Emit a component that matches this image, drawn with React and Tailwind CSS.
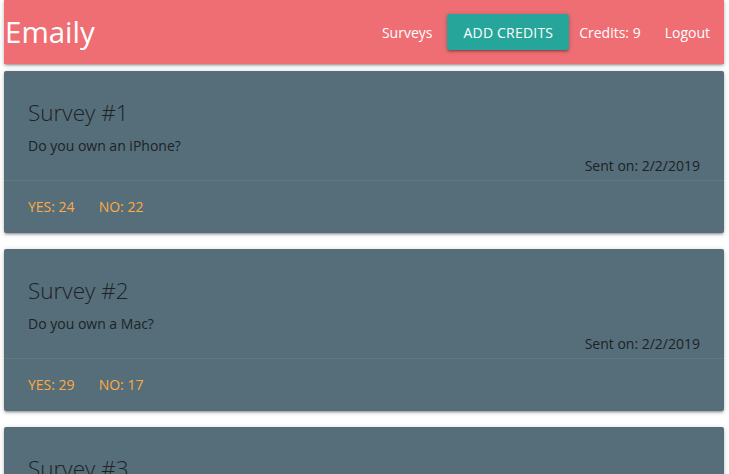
import React from "react";

const surveys = [
  { title: "Survey #1", body: "Do you own an iPhone?", sent: "2/2/2019", yes: 24, no: 22 },
  { title: "Survey #2", body: "Do you own a Mac?", sent: "2/2/2019", yes: 29, no: 17 },
  { title: "Survey #3", body: "Do you own an iPad?", sent: "2/2/2019", yes: 12, no: 30 },
];

const shadow =
  "shadow-[0_2px_2px_0_rgba(0,0,0,0.14),0_3px_1px_-2px_rgba(0,0,0,0.12),0_1px_5px_0_rgba(0,0,0,0.2)]";

function Header() {
  return (
    <nav
      className={`h-16 bg-[#ef6e74] text-white flex items-center justify-between ${shadow}`}
    >
      <a className="pl-[1px] text-[29.5px] leading-none pb-[1px]">Emaily</a>
      <ul className="flex items-center text-[14px] h-full">
        <li className="px-[15px]">Surveys</li>
        <li>
          <button
            className={`h-9 px-4 rounded-[2px] bg-[#26a69a] uppercase tracking-[0.2px] text-[14px] ${shadow}`}
          >
            Add Credits
          </button>
        </li>
        <li className="mx-[10px]">Credits: 9</li>
        <li className="px-[14px]">Logout</li>
      </ul>
    </nav>
  );
}

function SurveyCard({ survey }) {
  return (
    <div className={`mt-[7px] mb-4 bg-[#566e79] rounded-[2px] ${shadow}`}>
      <div className="px-6 pt-[26px] pb-[4px] text-[#1c2227]">
        <span className="block text-[22.5px] leading-8 font-light mb-[7px]">{survey.title}</span>
        <p className="text-[14px] leading-5">{survey.body}</p>
        <p className="text-[14px] leading-5 text-right">Sent on: {survey.sent}</p>
      </div>
      <div className="border-t border-[rgba(160,160,160,0.2)] px-6 py-4 flex gap-6 text-[14px] leading-5 text-[#ffab40]">
        <a>YES: {survey.yes}</a>
        <a>NO: {survey.no}</a>
      </div>
    </div>
  );
}

export default function App() {
  return (
    <div
      className="min-h-screen bg-white pl-1 w-[724px]"
      style={{ fontFamily: '"Open Sans", "Noto Sans", sans-serif' }}
    >
      <Header />
      {surveys.map((s) => (
        <SurveyCard key={s.title} survey={s} />
      ))}
    </div>
  );
}
